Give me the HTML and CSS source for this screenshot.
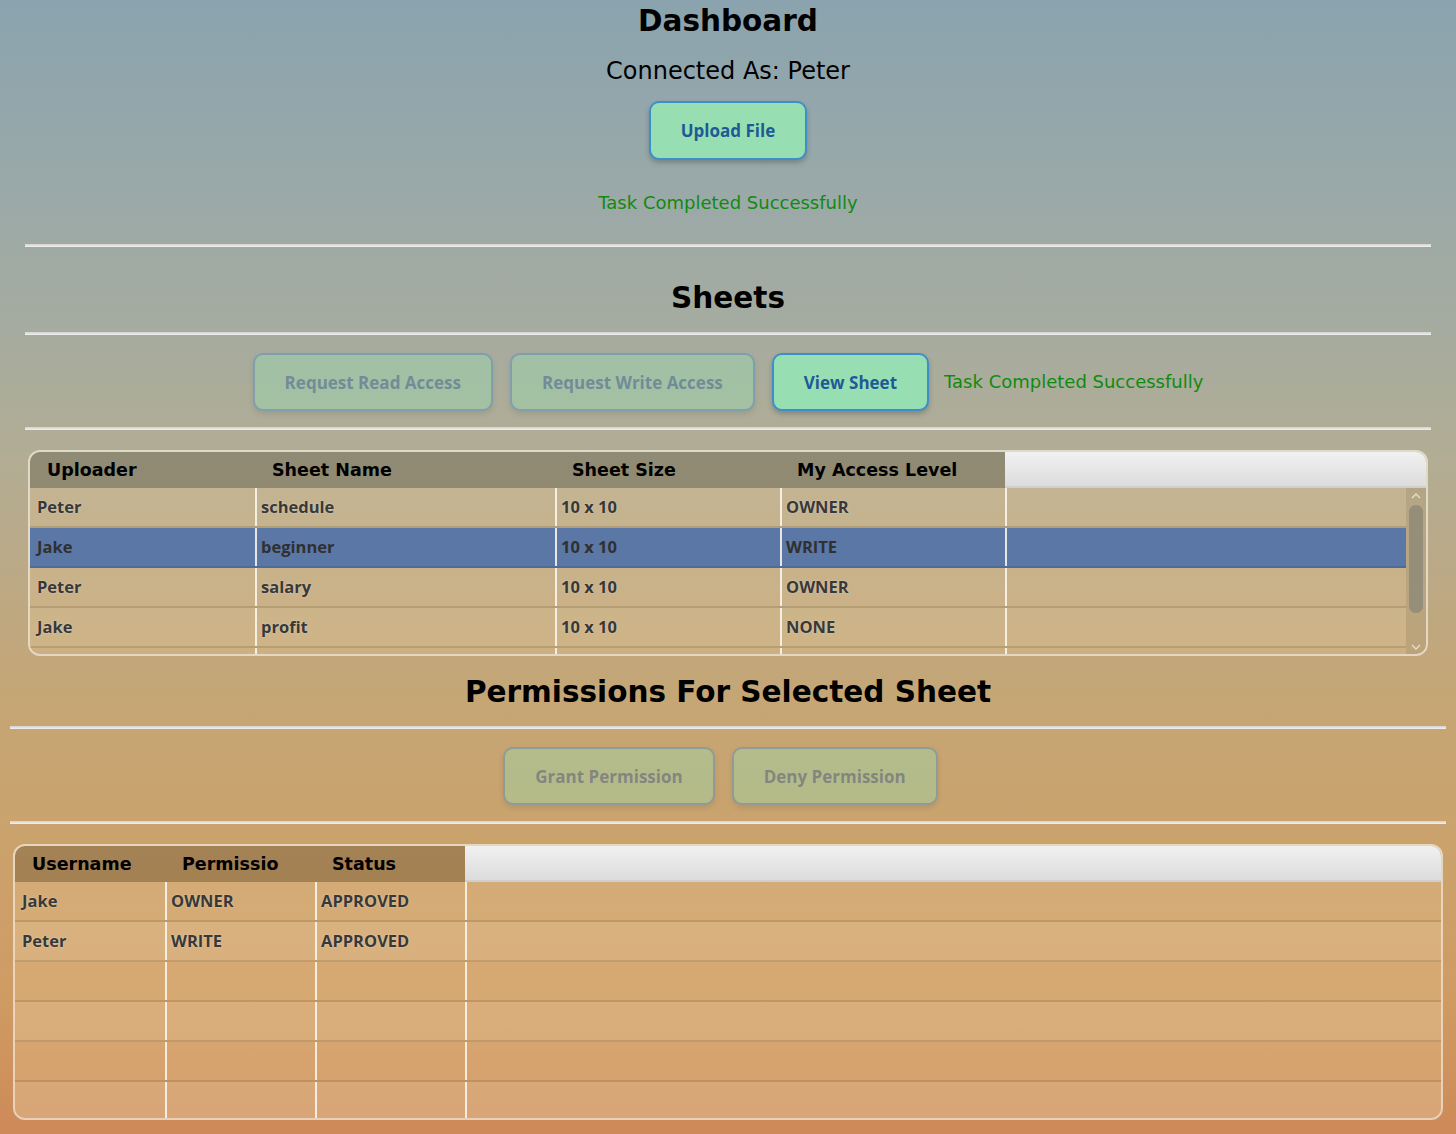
FILE: index.html
```html
<!DOCTYPE html>
<html>
<head>
<meta charset="utf-8">
<title>Dashboard</title>
<link rel="stylesheet" href="styles.css">
</head>
<body>
<main class="page">
  <section class="top">
    <h1 class="title first">Dashboard</h1>
    <p class="connected">Connected As: Peter</p>
    <div class="center"><button class="btn">Upload File</button></div>
    <p class="status">Task Completed Successfully</p>
    <hr class="sep sep-lg">
    <h2 class="title t-sheets">Sheets</h2>
    <hr class="sep sep-sm">
    <div class="actions">
      <button class="btn disabled">Request Read Access</button>
      <button class="btn disabled">Request Write Access</button>
      <button class="btn">View Sheet</button>
      <span class="status-inline">Task Completed Successfully</span>
    </div>
    <hr class="sep sep-md">
    <div class="table sheets">
      <div class="thead">
        <div class="th c1">Uploader</div>
        <div class="th c2">Sheet Name</div>
        <div class="th c3">Sheet Size</div>
        <div class="th c4">My Access Level</div>
        <div class="th-fill"></div>
      </div>
      <div class="tbody">
        <div class="rows">
          <div class="tr"><div class="td c1">Peter</div><div class="td c2">schedule</div><div class="td c3">10 x 10</div><div class="td c4">OWNER</div><div class="td fill"></div></div>
          <div class="tr selected"><div class="td c1">Jake</div><div class="td c2">beginner</div><div class="td c3">10 x 10</div><div class="td c4">WRITE</div><div class="td fill"></div></div>
          <div class="tr"><div class="td c1">Peter</div><div class="td c2">salary</div><div class="td c3">10 x 10</div><div class="td c4">OWNER</div><div class="td fill"></div></div>
          <div class="tr"><div class="td c1">Jake</div><div class="td c2">profit</div><div class="td c3">10 x 10</div><div class="td c4">NONE</div><div class="td fill"></div></div>
          <div class="tr"><div class="td c1"></div><div class="td c2"></div><div class="td c3"></div><div class="td c4"></div><div class="td fill"></div></div>
        </div>
        <div class="vscroll">
          <svg class="arrow" width="10" height="8" viewBox="0 0 10 8"><path d="M1 6 L5 2 L9 6" fill="none" stroke="#e6dfd0" stroke-width="1.3"/></svg>
          <div class="thumb"></div>
          <div class="track-rest"></div>
          <svg class="arrow" width="10" height="8" viewBox="0 0 10 8"><path d="M1 2 L5 6 L9 2" fill="none" stroke="#e6dfd0" stroke-width="1.3"/></svg>
        </div>
      </div>
    </div>
  </section>
  <section class="bottom">
    <h2 class="title t-perms">Permissions For Selected Sheet</h2>
    <hr class="sep sep-sm">
    <div class="actions">
      <button class="btn disabled">Grant Permission</button>
      <button class="btn disabled">Deny Permission</button>
      <span class="status-inline"></span>
    </div>
    <hr class="sep sep-md">
    <div class="table perms">
      <div class="thead">
        <div class="th p1">Username</div>
        <div class="th p2">Permissio</div>
        <div class="th p3">Status</div>
        <div class="th-fill"></div>
      </div>
      <div class="rows">
        <div class="tr"><div class="td p1">Jake</div><div class="td p2">OWNER</div><div class="td p3">APPROVED</div><div class="td fill"></div></div>
        <div class="tr"><div class="td p1">Peter</div><div class="td p2">WRITE</div><div class="td p3">APPROVED</div><div class="td fill"></div></div>
        <div class="tr"><div class="td p1"></div><div class="td p2"></div><div class="td p3"></div><div class="td fill"></div></div>
        <div class="tr"><div class="td p1"></div><div class="td p2"></div><div class="td p3"></div><div class="td fill"></div></div>
        <div class="tr"><div class="td p1"></div><div class="td p2"></div><div class="td p3"></div><div class="td fill"></div></div>
        <div class="tr"><div class="td p1"></div><div class="td p2"></div><div class="td p3"></div><div class="td fill"></div></div>
      </div>
    </div>
  </section>
</main>
</body>
</html>
```
FILE: styles.css
```css
* { box-sizing: border-box; }
html, body { margin: 0; padding: 0; }
body {
  width: 1456px;
  height: 1134px;
  overflow: hidden;
  font-family: "DejaVu Sans", Verdana, sans-serif;
  color: #000;
  background: linear-gradient(180deg,
    #8aa3ae 0px,
    #97a8aa 150px,
    #a3aba2 300px,
    #b1ad95 450px,
    #bca985 580px,
    #c5a675 700px,
    #cba26c 850px,
    #cf9b63 1000px,
    #cd8a58 1134px);
}
.page { width: 1456px; }
.top { padding: 0 25px; }
.bottom { padding: 0 10px; }

.title {
  margin: 0;
  font-size: 29.5px;
  font-weight: bold;
  line-height: 42px;
  text-align: center;
  color: #000;
}
.t-sheets { margin-top: 30px; }
.t-perms { margin-top: 15px; }

.connected {
  margin: 14px 0 0;
  font-size: 24px;
  line-height: 30px;
  text-align: center;
}
.center { display: flex; justify-content: center; margin-top: 15px; }

.btn {
  height: 59px;
  padding: 0 30px;
  border: 2px solid #3d8fca;
  border-radius: 10px;
  background: #97dfb2;
  color: #1d5a96;
  font-family: "Open Sans", sans-serif;
  font-weight: 700;
  font-size: 17px;
  box-shadow: 0 3px 5px rgba(40, 40, 40, 0.28);
  cursor: pointer;
}
.actions .btn { height: 58px; }
.btn.disabled { opacity: 0.4; }

.status {
  margin: 31px 0 0;
  color: #118a11;
  font-size: 18px;
  line-height: 24px;
  text-align: center;
}
.status-inline {
  color: #118a11;
  font-size: 18px;
  line-height: 24px;
  margin-left: -2px;
}

.sep {
  display: block;
  height: 3px;
  border: 0;
  margin: 0;
  background: linear-gradient(180deg, #d2d3d0, #f1f1ef);
}
.sep-lg { margin-top: 29px; }
.sep-sm { margin-top: 13px; }
.sep-md { margin-top: 16px; }

.actions {
  display: flex;
  justify-content: center;
  align-items: center;
  gap: 17px;
  margin-top: 18px;
}

/* tables */
.table {
  margin: 20px 3px 0;
  border: 2px solid rgba(240, 232, 218, 0.75);
  border-radius: 12px;
  overflow: hidden;
  display: flex;
  flex-direction: column;
}
.sheets { height: 206px; }
.perms { height: 276px; }

.thead { display: flex; height: 36px; flex: none; }
.th {
  height: 36px;
  padding-left: 17px;
  background: rgba(25, 20, 5, 0.22);
  font-weight: bold;
  font-size: 17.5px;
  line-height: 36px;
  color: #000;
  white-space: nowrap;
  overflow: hidden;
}
.th-fill {
  flex: 1;
  background: linear-gradient(180deg, #f1f1f1, #dcdcdc);
  border-bottom: 2px solid #cfcfcf;
}

.tbody { display: flex; flex: 1; min-height: 0; }
.rows {
  flex: 1;
  overflow: hidden;
  background: rgba(232, 200, 150, 0.3);
}
.tr {
  display: flex;
  height: 40px;
  border-bottom: 2px solid rgba(110, 85, 50, 0.22);
}
.perms .tr:nth-child(even) { background: rgba(255, 250, 235, 0.09); }
.sheets .tr:nth-child(even) { background: rgba(255, 250, 235, 0.04); }
.tr.selected,
.sheets .tr.selected {
  background: #5a77a6;
  border-bottom-color: #4e6b99;
}
.td {
  height: 38px;
  padding-left: 4px;
  border-left: 2px solid rgba(250, 246, 238, 0.88);
  font-family: "Open Sans", sans-serif;
  font-weight: 700;
  font-size: 16.5px;
  line-height: 38px;
  color: #383838;
  text-shadow: 0 0 2px rgba(255, 255, 255, 0.45);
  white-space: nowrap;
  overflow: hidden;
}
.selected .td { text-shadow: none; color: #303030; }
.td:first-child { border-left: 0; padding-left: 7px; }
.td.fill { flex: 1; }

.c1 { width: 225px; }
.c2 { width: 300px; }
.c3 { width: 225px; }
.c4 { width: 225px; }
.p1, .p2, .p3 { width: 150px; }

.vscroll {
  width: 20px;
  flex: none;
  background: rgba(180, 160, 120, 0.45);
  display: flex;
  flex-direction: column;
  align-items: center;
}
.arrow { display: block; margin-top: 4px; flex: none; }
.vscroll .arrow:last-child { margin-top: 0; margin-bottom: 3px; }
.thumb {
  width: 14px;
  height: 108px;
  margin-top: 5px;
  border-radius: 7px;
  background: #958f79;
  flex: none;
}
.track-rest { flex: 1; }
```
